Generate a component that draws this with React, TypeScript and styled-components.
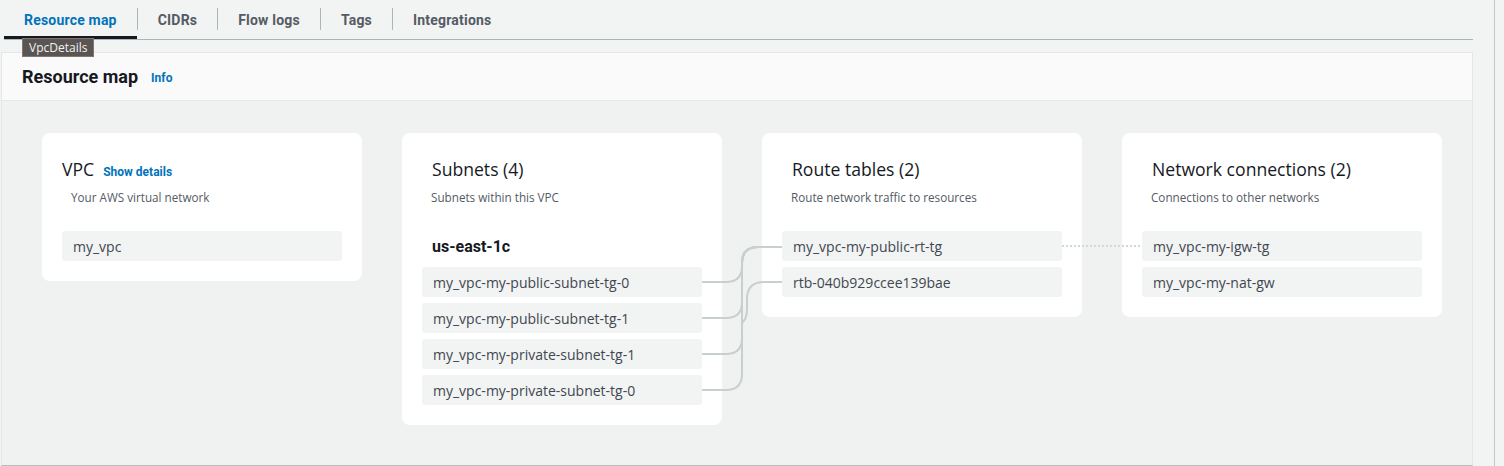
import React from 'react'
import styled, { createGlobalStyle } from 'styled-components'

const GlobalStyle = createGlobalStyle`
  body {
    margin: 0;
    background: #f2f3f3;
    font-family: "Open Sans", "Liberation Sans", sans-serif;
    color: #16191f;
  }
`

const tabs = ['Resource map', 'CIDRs', 'Flow logs', 'Tags', 'Integrations']

type Card = {
  title: string
  link?: string
  sub: string
  group?: string
  items: string[]
  narrow?: boolean
}

const cards: Card[] = [
  { title: 'VPC', link: 'Show details', sub: 'Your AWS virtual network', items: ['my_vpc'], narrow: true },
  {
    title: 'Subnets (4)',
    sub: 'Subnets within this VPC',
    group: 'us-east-1c',
    items: [
      'my_vpc-my-public-subnet-tg-0',
      'my_vpc-my-public-subnet-tg-1',
      'my_vpc-my-private-subnet-tg-1',
      'my_vpc-my-private-subnet-tg-0',
    ],
  },
  {
    title: 'Route tables (2)',
    sub: 'Route network traffic to resources',
    items: ['my_vpc-my-public-rt-tg', 'rtb-040b929ccee139bae'],
  },
  {
    title: 'Network connections (2)',
    sub: 'Connections to other networks',
    items: ['my_vpc-my-igw-tg', 'my_vpc-my-nat-gw'],
  },
]

// subnet row centers, relative to first item top
const subnetRows = [51, 87, 123, 159]

const App = () => {
  return (
    <Page>
      <GlobalStyle />
      <Content>
        <TabBar>
          {tabs.map((t, i) => (
            <React.Fragment key={t}>
              {i > 0 && <TabSep />}
              <Tab $active={i === 0}>{t}</Tab>
            </React.Fragment>
          ))}
        </TabBar>
        <Tooltip>VpcDetails</Tooltip>

        <Panel>
          <PanelHeader>
            <PanelTitle>Resource map</PanelTitle>
            <LinkText>Info</LinkText>
          </PanelHeader>
          <MapBody>
            {cards.map((c) => (
              <MapCard key={c.title}>
                <CardTitle $narrow={c.narrow}>
                  {c.title}
                  {c.link && <TitleLink>{c.link}</TitleLink>}
                </CardTitle>
                <CardSub>{c.sub}</CardSub>
                <ItemList>
                  {c.group && <GroupLabel>{c.group}</GroupLabel>}
                  {c.items.map((it) => (
                    <Item key={it}>{it}</Item>
                  ))}
                </ItemList>
              </MapCard>
            ))}

            <Connectors width="80" height="180" viewBox="0 0 80 180">
              {subnetRows.map((y) => (
                <path
                  key={y}
                  d={`M0 ${y} H24 Q40 ${y} 40 ${y - 16} V32 Q40 16 56 16 H80`}
                />
              ))}
              <path d="M80 51 H62 Q45 51 45 68 V78 Q45 88 40 92" />
            </Connectors>

            <Dotted width="80" height="4" viewBox="0 0 80 4">
              <line x1="0" y1="2" x2="80" y2="2" />
            </Dotted>
          </MapBody>
        </Panel>
      </Content>
    </Page>
  )
}

export default App

const Page = styled.div`
  position: relative;
  display: flex;
  width: 1504px;
  height: 466px;
  overflow: hidden;
`
const Content = styled.div`
  width: 1495px;
  height: 466px;
  border-right: 1px solid #c4c7c7;
  padding-left: 1px;
  box-sizing: border-box;
`
const TabBar = styled.div`
  display: flex;
  align-items: center;
  margin-left: 3px;
  width: 1469px;
  height: 40px;
  border-bottom: 1px solid #aab7b8;
  box-sizing: border-box;
`
const Tab = styled.div<{ $active?: boolean }>`
  display: flex;
  align-items: center;
  height: 39px;
  padding: 3px 20px 0;
  box-sizing: border-box;
  font-family: Roboto, "Liberation Sans", sans-serif;
  font-size: 14px;
  font-weight: 700;
  letter-spacing: 0.2px;
  color: ${({ $active }) => ($active ? '#0073bb' : '#545b64')};
  border-bottom: 3px solid ${({ $active }) => ($active ? '#16191f' : 'transparent')};
`
const TabSep = styled.div`
  width: 1px;
  height: 22px;
  background: #aab7b8;
  margin-top: -2px;
`
const Tooltip = styled.div`
  position: absolute;
  left: 22px;
  top: 38px;
  height: 19px;
  padding: 0 6px;
  display: flex;
  align-items: center;
  background: #5a5553;
  border: 1px solid #7c7674;
  box-sizing: border-box;
  color: #f2f2f2;
  font-size: 12px;
  z-index: 2;
`
const Panel = styled.div`
  margin-top: 12px;
  width: 1472px;
  border: 1px solid #e4e7e7;
  border-bottom: 1px solid #b9bcbc;
  box-sizing: border-box;
`
const PanelHeader = styled.div`
  display: flex;
  align-items: center;
  gap: 13px;
  height: 47px;
  padding: 0 20px;
  background: #fafafa;
  border-bottom: 1px solid #e4e7e7;
`
const PanelTitle = styled.div`
  font-family: Roboto, "Liberation Sans", sans-serif;
  font-size: 18px;
  font-weight: 700;
  color: #16191f;
`
const LinkText = styled.span`
  font-family: Roboto, "Liberation Sans", sans-serif;
  font-size: 12px;
  font-weight: 700;
  color: #0073bb;
  padding-top: 3px;
`
const TitleLink = styled(LinkText)`
  margin-left: 9px;
  padding-top: 0;
`
const MapBody = styled.div`
  position: relative;
  display: flex;
  align-items: flex-start;
  gap: 40px;
  height: 364px;
  padding: 32px 40px;
  box-sizing: border-box;
  background: #f0f1f1;
`
const MapCard = styled.div`
  flex-shrink: 0;
  width: 320px;
  background: #ffffff;
  border-radius: 8px;
  padding: 25px 20px 20px;
  box-sizing: border-box;
`
const CardTitle = styled.div<{ $narrow?: boolean }>`
  font-size: 17.6px;
  line-height: 22px;
  height: 22px;
  color: #16191f;
  padding-left: ${({ $narrow }) => ($narrow ? '0' : '10px')};
`
const CardSub = styled.div`
  font-size: 11.7px;
  line-height: 16px;
  margin-top: 9px;
  padding-left: 9px;
  color: #545b64;
`
const ItemList = styled.div`
  display: flex;
  flex-direction: column;
  gap: 6px;
  margin-top: 26px;
`
const GroupLabel = styled.div`
  height: 30px;
  display: flex;
  align-items: center;
  padding-left: 10px;
  font-family: Roboto, "Liberation Sans", sans-serif;
  font-size: 16px;
  font-weight: 700;
  color: #16191f;
`
const Item = styled.div`
  height: 30px;
  display: flex;
  align-items: center;
  padding-left: 11px;
  background: #f2f3f3;
  border-radius: 3px;
  font-size: 14px;
  color: #414750;
`
const Connectors = styled.svg`
  position: absolute;
  left: 700px;
  top: 130px;
  fill: none;
  stroke: #c8cfcf;
  stroke-width: 2;
`
const Dotted = styled.svg`
  position: absolute;
  left: 1060px;
  top: 143px;
  stroke: #d3d8d8;
  stroke-width: 2;
  stroke-dasharray: 2 2;
`
